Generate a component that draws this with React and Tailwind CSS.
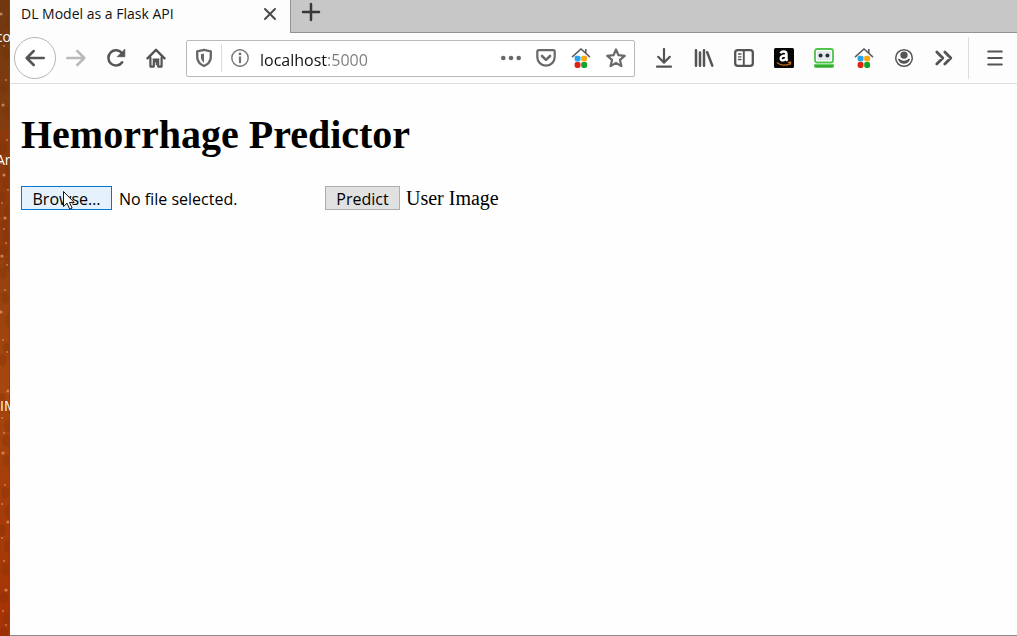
import React from "react";

const UI_FONT = "font-['Open_Sans','Noto_Sans',sans-serif]";

function Icon({ children, className = "size-5 text-[#545456]" }) {
  return (
    <svg viewBox="0 0 20 20" fill="none" stroke="currentColor" strokeWidth="2.5" strokeLinecap="round" strokeLinejoin="round" className={className} aria-hidden="true">
      {children}
    </svg>
  );
}

function BackIcon() {
  return <Icon><path d="M18.7 10H2M8.7 3L1.7 10l7 7" /></Icon>;
}

function ForwardIcon() {
  return <Icon className="size-5 text-[#bababa]"><path d="M1.3 10H18M11.3 3l7 7-7 7" /></Icon>;
}

function ReloadIcon() {
  return (
    <Icon>
      <path d="M16.2 14.2A7.6 7.6 0 1 1 16 5.2" />
      <path d="M18.800 1.500v7.2h-7.2z" fill="currentColor" strokeWidth="0.8" />
    </Icon>
  );
}

function HomeIcon() {
  return (
    <Icon>
      <path d="M1.500 10.300L10 1.800l8.500 8.500" strokeWidth="2.400" />
      <path d="M4.400 9.500v9.100h3.400v-5.400h4.400v5.400h3.400V9.500" strokeWidth="2.200" />
      <path d="M7 12V9.800l3-2.800 3 2.800V12" fill="#fdfdfd" stroke="none" />
      <path d="M7.200 11.400h5.600" strokeWidth="1.600" />
      <path d="M10.400 14.500v2" strokeWidth="1.400" />
    </Icon>
  );
}

function ShieldIcon() {
  return (
    <Icon className="size-5 text-[#69696b]">
      <path d="M10 1.800L3.200 3.400v5.400c0 4.300 2.800 7.600 6.800 9.200 4-1.600 6.800-4.900 6.800-9.200V3.400z" strokeWidth="2.400" />
      <path d="M10 5.600L6.900 6.300v2.800c0 2.300 1.200 4.300 3.100 5.600z" fill="currentColor" stroke="none" />
    </Icon>
  );
}

function InfoIcon() {
  return (
    <Icon className="size-5 text-[#747476]">
      <circle cx="10" cy="10" r="8.2" strokeWidth="1.4" />
      <circle cx="10" cy="5.9" r="1.4" fill="currentColor" stroke="none" />
      <path d="M10 9.300v5" strokeWidth="2.200" />
    </Icon>
  );
}

function DotsIcon() {
  return (
    <Icon className="size-5 text-[#69696b]">
      <g fill="currentColor" stroke="none">
        <circle cx="2.300" cy="10" r="2.300" />
        <circle cx="10" cy="10" r="2.300" />
        <circle cx="17.700" cy="10" r="2.300" />
      </g>
    </Icon>
  );
}

function PocketIcon() {
  return (
    <Icon className="size-5 text-[#69696b]">
      <path d="M2.600 2.200h14.800a1.300 1.300 0 0 1 1.300 1.300V9a8.700 8.700 0 0 1-17.400 0V3.500a1.300 1.300 0 0 1 1.300-1.300z" strokeWidth="2.200" />
      <path d="M6 8l4 3.900L14 8" strokeWidth="2.600" />
    </Icon>
  );
}

function ColorHouseIcon() {
  return (
    <Icon className="size-5 text-[#5c5e61]">
      <path d="M1 9.200L10 1l9 8.200M14.800 1v4.200" strokeWidth="1.600" strokeLinecap="butt" strokeLinejoin="miter" />
      <g stroke="none">
        <rect x="3.600" y="7.800" width="5.900" height="5.600" rx="1.800" fill="#24a4ea" />
        <rect x="10.200" y="7.800" width="5.900" height="5.600" rx="1.800" fill="#fba70f" />
        <rect x="3.600" y="14" width="5.900" height="5.900" rx="1.800" fill="#dd2514" />
        <rect x="10.200" y="14" width="5.900" height="5.900" rx="1.800" fill="#13a32b" />
      </g>
    </Icon>
  );
}

function StarIcon() {
  return (
    <Icon className="size-5 text-[#69696b]">
      <path d="M10 1.500l2.500 5.700 6.200.6-4.700 4.100 1.400 6.200-5.400-3.200-5.400 3.200L6 11.900 1.300 7.800l6.200-.6z" strokeWidth="2.200" />
    </Icon>
  );
}

function DownloadIcon() {
  return <Icon><path d="M10 1v13M4.200 8.800L10 14.600l5.800-5.800M3 18.700h14" strokeWidth="2.200" /></Icon>;
}

function LibraryIcon() {
  return <Icon><path d="M2 2.200v15.600M6 4.500v13.300M10 2.200v15.600M13.200 4.200l5.100 13.400" strokeWidth="2.500" /></Icon>;
}

function SidebarIcon() {
  return (
    <Icon>
      <rect x="1.200" y="2.200" width="17.600" height="15.600" rx="2.600" strokeWidth="2.300" />
      <path d="M9.800 2.500v15" strokeWidth="1.900" />
      <path d="M4.500 6h2.500M4.500 8.800h2.500M4.500 11.500h2.500" strokeWidth="1.300" />
    </Icon>
  );
}

function AmazonIcon() {
  return (
    <Icon>
      <rect width="20" height="20" rx="1.500" fill="#050505" stroke="none" />
      <path d="M6.700 5.400c.7-2.500 5.700-2.500 5.700.7v4.600c0 .9.400 1.300 1.200 2" stroke="#fff" strokeWidth="2.500" strokeLinecap="butt" />
      <path d="M12.200 7.500c-3.600 0-5.600.8-5.600 3 0 2.700 4.500 2.500 5.600-.7" stroke="#fff" strokeWidth="2.300" />
      <path d="M3.200 14.800c3.800 3 9.300 3.200 12.900.6M14.400 14.400l2.400-.2-.6 2.300" stroke="#c96f16" strokeWidth="1.200" />
    </Icon>
  );
}

function RobotIcon() {
  return (
    <Icon>
      <rect x="1" y="1" width="18" height="13.500" rx="2" fill="#fff" stroke="#4fc34c" strokeWidth="1.800" />
      <rect x="3" y="3" width="14" height="9.500" rx="1.500" fill="#e2e8ea" stroke="none" />
      <circle cx="6.600" cy="7.600" r="2" fill="#24323d" stroke="none" />
      <circle cx="13.400" cy="7.600" r="2" fill="#24323d" stroke="none" />
      <path d="M.3 16h19.400v2.500a1.300 1.300 0 0 1-1.300 1.300H1.600A1.300 1.300 0 0 1 .3 18.500z" fill="#35ad32" stroke="none" />
      <path d="M.8 16.500h18.400" stroke="#67d45f" strokeWidth="1" />
    </Icon>
  );
}

function AccountIcon() {
  return (
    <Icon>
      <circle cx="10" cy="10" r="8.300" strokeWidth="1.500" />
      <circle cx="10" cy="7.100" r="3.700" fill="currentColor" stroke="none" />
      <path d="M4 10.900c1.200-.2 2.100.1 2.700.8 1.700 1.500 4.900 1.500 6.600 0 .6-.7 1.500-1 2.700-.8-.6 3-3 4.900-6 4.900s-5.400-1.900-6-4.900z" fill="currentColor" stroke="none" />
    </Icon>
  );
}

function OverflowIcon() {
  return <Icon><path d="M2.800 4l6 6-6 6M10.800 4l6 6-6 6" strokeWidth="2.800" /></Icon>;
}

function MenuIcon() {
  return <Icon><path d="M3.300 3.500h13.400M3.300 10h13.400M3.300 16.500h13.400" strokeWidth="2.200" /></Icon>;
}

const toolbarItems = [
  { label: "Downloads", Glyph: DownloadIcon },
  { label: "Library", Glyph: LibraryIcon },
  { label: "Sidebars", Glyph: SidebarIcon },
  { label: "Amazon", Glyph: AmazonIcon },
  { label: "RoboForm", Glyph: RobotIcon },
  { label: "Start page", Glyph: ColorHouseIcon },
  { label: "Account", Glyph: AccountIcon },
  { label: "More tools", Glyph: OverflowIcon },
];

const addressActions = [
  { label: "Page actions", Glyph: DotsIcon },
  { label: "Save to Pocket", Glyph: PocketIcon },
  { label: "Start page", Glyph: ColorHouseIcon },
  { label: "Bookmark this page", Glyph: StarIcon },
];

function ToolButton({ label, children, className = "h-10 w-10" }) {
  return (
    <button type="button" aria-label={label} className={`flex shrink-0 items-center justify-center ${className}`}>
      {children}
    </button>
  );
}

const specks = [
  [1, 14], [4, 46], [6, 80], [3, 105], [7, 140], [1, 163], [4, 175], [8, 190], [2, 203], [5, 218],
  [4, 229], [6, 243], [2, 256], [7, 265], [5, 290], [1, 312], [3, 340], [7, 352], [8, 391], [2, 418],
  [4, 433], [3, 453], [5, 485], [2, 504], [8, 522], [2, 538], [4, 561], [6, 590], [3, 611], [6, 625],
];

function DesktopEdge() {
  return (
    <aside className="relative w-[10px] shrink-0 overflow-hidden bg-linear-to-b from-[#70380f] via-[#a6460e] via-60% to-[#a63205]">
      <svg className="absolute inset-0 h-full w-full" aria-hidden="true">
        <rect y="130" width="10" height="130" fill="#953509" opacity="0.5" />
        {specks.map(([x, y], i) => (
          <g key={y}>
            <ellipse cx={10 - x} cy={y + 8} rx="4" ry="6" fill="#752b08" opacity="0.25" />
            <circle cx={x} cy={y} r={i % 3 === 0 ? 1.6 : 0.9} fill="#e6a273" opacity="0.7" />
          </g>
        ))}
        <path d="M9.500 0v636" stroke="#78422b" />
      </svg>
      <span className={`absolute top-[27px] -right-px text-sm leading-5 text-white text-shadow-sm ${UI_FONT}`}>co</span>
      <span className={`absolute top-[150px] -left-1 text-sm leading-5 text-white text-shadow-sm ${UI_FONT}`}>Ar</span>
      <span className={`absolute top-[396px] left-0 text-sm leading-5 text-white text-shadow-sm ${UI_FONT}`}>IM</span>
    </aside>
  );
}

function TabStrip() {
  return (
    <div className="flex h-[33px] bg-[#c7c7c7]">
      <div className={`flex w-[280px] items-center justify-between bg-[#fdfdfd] pr-3 pb-[5px] pl-[11px] text-sm text-[#111] ${UI_FONT}`}>
        <span>DL Model as a Flask API</span>
        <button type="button" aria-label="Close tab">
          <svg viewBox="0 0 16 16" className="size-4 text-[#4b4b4d]" stroke="currentColor" strokeWidth="2" strokeLinecap="round" aria-hidden="true">
            <path d="M3 3l10 10M13 3L3 13" />
          </svg>
        </button>
      </div>
      <div className="flex flex-1 items-start border-b border-l border-[#929292] pt-[2px] pl-[10px]">
        <button type="button" aria-label="New tab">
          <svg viewBox="0 0 20 20" className="size-5 text-[#38383a]" stroke="currentColor" strokeWidth="2.500" strokeLinecap="round" aria-hidden="true">
            <path d="M10 2v16M2 10h16" />
          </svg>
        </button>
      </div>
    </div>
  );
}

function Toolbar() {
  return (
    <div className="flex h-[51px] items-center border-b border-[#e0e0e0] bg-[#fdfdfd] pr-[2px] pl-1">
      <ToolButton label="Back" className="size-[42px] rounded-full border border-[#b6b6b6] bg-white"><BackIcon /></ToolButton>
      <ToolButton label="Forward"><ForwardIcon /></ToolButton>
      <ToolButton label="Reload"><ReloadIcon /></ToolButton>
      <ToolButton label="Home"><HomeIcon /></ToolButton>
      <div className="mr-[9px] ml-[10px] flex h-[37px] min-w-0 flex-1 items-center rounded-xs border border-[#b9b9b9] bg-white pr-px">
        <ToolButton label="Tracking protection" className="h-full w-[34px]"><ShieldIcon /></ToolButton>
        <div className="h-7 w-px bg-[#dcdcdc]" />
        <ToolButton label="Site information" className="h-full w-[35px]"><InfoIcon /></ToolButton>
        <input
          aria-label="Address"
          type="text"
          defaultValue="localhost:5000"
          className={`h-7 min-w-0 flex-1 bg-[linear-gradient(to_right,#111_71px,#7b7b7d_71px)] bg-clip-text pt-[3px] pl-[3px] text-base text-transparent outline-none ${UI_FONT}`}
        />
        {addressActions.map(({ label, Glyph }) => (
          <ToolButton key={label} label={label} className="h-full w-[35px]"><Glyph /></ToolButton>
        ))}
      </div>
      {toolbarItems.map(({ label, Glyph }) => (
        <ToolButton key={label} label={label}><Glyph /></ToolButton>
      ))}
      <div className="mr-[6px] ml-1 h-[42px] w-px bg-[#dcdcdc]" />
      <ToolButton label="Menu"><MenuIcon /></ToolButton>
    </div>
  );
}

function Pointer() {
  return (
    <svg viewBox="0 0 13 20" className="pointer-events-none absolute top-[3px] left-10 h-5 w-[13px]" aria-hidden="true">
      <path d="M1.500 1.500v15l3.500-3.300 2.700 6 2.400-1.100-2.600-5.700h4.700z" fill="#fff" stroke="#151515" strokeWidth="1" />
    </svg>
  );
}

function PredictorPage() {
  return (
    <main className="flex-1 bg-[#fefefe] px-[11px] pt-7 text-black">
      <h1 className="font-['Liberation_Serif',serif] text-[40px] leading-[46px] font-bold">Hemorrhage Predictor</h1>
      <form className="mt-7 flex items-center" onSubmit={(event) => event.preventDefault()}>
        <div className={`flex w-[304px] items-center gap-[7px] text-base leading-[22px] ${UI_FONT}`}>
          <label htmlFor="image-file" className="relative h-6 w-[91px] border border-[#0078d7] bg-[#e5f1fb] pt-px text-center">
            Browse…
            <Pointer />
          </label>
          <input id="image-file" type="file" className="sr-only" />
          <span className="pt-0.5">No file selected.</span>
        </div>
        <button type="submit" className={`h-6 w-[75px] border border-[#adadad] bg-[#e1e1e1] pt-px text-base leading-[22px] ${UI_FONT}`}>Predict</button>
        <span className="ml-[6px] font-['Liberation_Serif',serif] text-xl leading-6">User Image</span>
      </form>
    </main>
  );
}

export default function App() {
  return (
    <div className="flex min-h-screen">
      <DesktopEdge />
      <div className="flex min-w-0 flex-1 flex-col border-b border-[#8c8c8c]">
        <TabStrip />
        <Toolbar />
        <PredictorPage />
      </div>
    </div>
  );
}
